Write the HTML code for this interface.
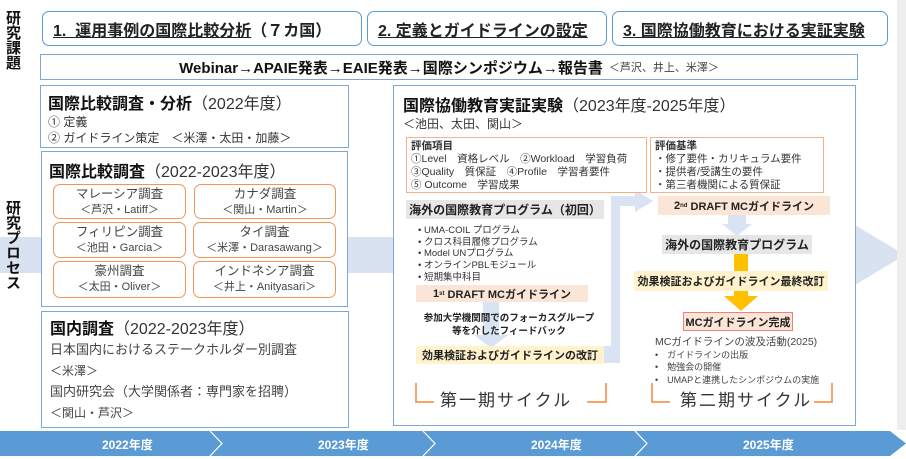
<!DOCTYPE html>
<html><head><meta charset="utf-8"><style>
*{margin:0;padding:0;box-sizing:border-box}
body{width:906px;height:459px;background:#fff;position:relative;overflow:hidden;font-family:"Liberation Sans","Noto Sans CJK JP",sans-serif;color:#222}
.a{position:absolute}
.vt{writing-mode:vertical-rl;font-weight:bold;font-size:15px;line-height:16px;color:#111;letter-spacing:0}
.top{border:1.5px solid #5b9bd5;border-radius:7px;background:#fff;font-size:16px;font-weight:bold;display:flex;align-items:center;padding-left:10px}
.top u{text-decoration:underline}
.bx{border:1.3px solid #7fa7d6;background:#fff}
.h{font-size:16px;font-weight:bold;color:#111}
.h span{font-weight:normal;color:#333}
.s{font-size:12px;color:#333;line-height:16px}
.ob{border:1.3px solid #f0955a;border-radius:7px;text-align:center;font-size:12.5px;line-height:17px;color:#444;padding-top:1px}
.ob small{font-size:11px;display:block;line-height:15px}
.grey{background:#e6e6e6;font-weight:bold;font-size:12px;display:flex;align-items:center;justify-content:center}
.pk{background:#fbe5d6;font-weight:bold;font-size:11px;display:flex;align-items:center;justify-content:center}
.yl{background:#fff2cc;font-weight:bold;font-size:11px;display:flex;align-items:center;justify-content:center}
.eb{border:1.3px solid #f4b183;font-size:10.5px;line-height:13px;padding:2px 4px;color:#333;background:#fff}
.ti{color:#fff;font-weight:bold;font-size:12px}
</style></head><body>
<!-- background big arrow -->
<div class="a" style="left:0;top:237px;width:860px;height:36px;background:#d9e2f1"></div>
<svg class="a" style="left:850px;top:222px" width="56" height="66"><polygon points="0,0 55,33 0,66" fill="#d9e2f1"/></svg>
<div class="a" style="left:897px;top:0;width:9px;height:430px;background:#eee"></div>

<div class="a vt" style="left:4px;top:10px">研究課題</div>
<div class="a vt" style="left:4px;top:200px">研究プロセス</div>

<div class="a top" style="left:42px;top:11px;width:320px;height:35px"><u>1.&nbsp; 運用事例の国際比較分析</u>（７カ国）</div>
<div class="a top" style="left:367px;top:11px;width:240px;height:35px"><u>2. 定義とガイドラインの設定</u></div>
<div class="a top" style="left:612px;top:11px;width:276px;height:35px"><u>3. 国際協働教育における実証実験</u></div>

<div class="a bx" style="left:40px;top:54px;width:818px;height:26px;font-size:15px;font-weight:bold;display:flex;align-items:center;justify-content:center;color:#111">Webinar→APAIE発表→EAIE発表→国際シンポジウム→報告書<span style="font-size:11px;font-weight:normal;color:#444;margin-left:6px">＜芦沢、井上、米澤＞</span></div>

<div class="a bx" style="left:40px;top:85px;width:309px;height:63px;padding:4px 7px">
<div class="h">国際比較調査・分析<span>（2022年度）</span></div>
<div class="s">① 定義</div><div class="s">② ガイドライン策定　＜米澤・太田・加藤＞</div></div>

<div class="a bx" style="left:41px;top:151px;width:307px;height:156px;padding:6px 7px"><div class="h">国際比較調査<span>（2022-2023年度）</span></div></div>
<div class="a ob" style="left:53px;top:184px;width:133px;height:35px">マレーシア調査<small>＜芦沢・Latiff＞</small></div>
<div class="a ob" style="left:194px;top:184px;width:142px;height:35px">カナダ調査<small>＜関山・Martin＞</small></div>
<div class="a ob" style="left:53px;top:222px;width:133px;height:36px">フィリピン調査<small>＜池田・Garcia＞</small></div>
<div class="a ob" style="left:193px;top:222px;width:143px;height:36px">タイ調査<small>＜米澤・Darasawang＞</small></div>
<div class="a ob" style="left:53px;top:261px;width:133px;height:37px">豪州調査<small>＜太田・Oliver＞</small></div>
<div class="a ob" style="left:193px;top:261px;width:143px;height:37px">インドネシア調査<small>＜井上・Anityasari＞</small></div>

<div class="a bx" style="left:41px;top:311px;width:308px;height:117px;padding:3px 8px">
<div class="h">国内調査<span>（2022-2023年度）</span></div>
<div style="font-size:13px;color:#444;line-height:22px">日本国内におけるステークホルダー別調査</div>
<div style="font-size:12px;color:#444;line-height:20px">＜米澤＞</div>
<div style="font-size:13px;color:#444;line-height:22px">国内研究会（大学関係者：専門家を招聘）</div>
<div style="font-size:12px;color:#444;line-height:20px">＜関山・芦沢＞</div></div>

<!-- right box -->
<div class="a bx" style="left:393px;top:85px;width:463px;height:341px;padding:6px 9px">
<div class="h">国際協働教育実証実験<span>（2023年度-2025年度）</span></div>
<div class="s" style="font-size:12px">＜池田、太田、関山＞</div></div>
<!-- light blue flow arrows -->
<div class="a" style="left:483px;top:301px;width:16px;height:40px;background:#dae3f3"></div>
<svg class="a" style="left:474px;top:335px" width="34" height="14"><polygon points="0,0 34,0 17,13" fill="#dae3f3"/></svg>
<div class="a" style="left:603px;top:346px;width:16px;height:17px;background:#dae3f3"></div>
<div class="a" style="left:611px;top:196px;width:9px;height:167px;background:#dae3f3"></div>
<div class="a" style="left:611px;top:196px;width:30px;height:10px;background:#dae3f3"></div>
<svg class="a" style="left:635px;top:190px" width="20" height="22"><polygon points="0,0 18,11 0,22" fill="#dae3f3"/></svg>
<div class="a" style="left:728px;top:214px;width:18px;height:12px;background:#dae3f3"></div>
<svg class="a" style="left:722px;top:224px" width="30" height="13"><polygon points="0,0 30,0 15,12" fill="#dae3f3"/></svg>

<div class="a eb" style="left:406px;top:137px;width:241px;height:56px"><b>評価項目</b><br>①Level　資格レベル　②Workload　学習負荷<br>③Quality　質保証　④Profile　学習者要件<br>⑤ Outcome　学習成果</div>
<div class="a eb" style="left:650px;top:137px;width:174px;height:56px"><b>評価基準</b><br>・修了要件・カリキュラム要件<br>・提供者/受講生の要件<br>・第三者機関による質保証</div>

<div class="a grey" style="left:406px;top:200px;width:198px;height:19px">海外の国際教育プログラム（初回）</div>
<div class="a" style="left:418px;top:225px;font-size:9.5px;line-height:11.7px;color:#333">• UMA-COIL プログラム<br>• クロス科目履修プログラム<br>• Model UNプログラム<br>• オンラインPBLモジュール<br>• 短期集中科目</div>
<div class="a pk" style="left:416px;top:285px;width:172px;height:17px">1<sup style="font-size:6px">st</sup>&nbsp;DRAFT MCガイドライン</div>
<div class="a" style="left:414px;top:312px;width:190px;text-align:center;font-size:9.5px;font-weight:bold;line-height:13px">参加大学機関間でのフォーカスグループ<br>等を介したフィードバック</div>
<div class="a yl" style="left:416px;top:346px;width:188px;height:18px">効果検証およびガイドラインの改訂</div>

<div class="a pk" style="left:658px;top:196px;width:172px;height:19px">2<sup style="font-size:6px">nd</sup>&nbsp;DRAFT MCガイドライン</div>
<div class="a grey" style="left:662px;top:235px;width:150px;height:19px">海外の国際教育プログラム</div>
<div class="a" style="left:734px;top:254px;width:14px;height:17px;background:#ffc000"></div>
<div class="a yl" style="left:634px;top:271px;width:194px;height:20px">効果検証およびガイドライン最終改訂</div>
<div class="a" style="left:734px;top:291px;width:14px;height:6px;background:#ffc000"></div>
<svg class="a" style="left:724px;top:296px" width="34" height="15"><polygon points="0,0 34,0 17,15" fill="#ffc000"/></svg>
<div class="a pk" style="left:683px;top:312px;width:110px;height:19px;border:1px solid #f08080">MCガイドライン完成</div>
<div class="a" style="left:655px;top:336px;font-size:10.5px;line-height:12.5px;color:#444">MCガイドラインの波及活動(2025)<br><span style="font-size:9px">•　ガイドラインの出版<br>•　勉強会の開催<br>•　UMAPと連携したシンポジウムの実施</span></div>

<!-- brackets -->
<svg class="a" style="left:414px;top:382px" width="420" height="24" fill="none" stroke="#f08a3c" stroke-width="1.5">
<path d="M2,1 V20 H20"/><path d="M173,20 H192 V1"/>
<path d="M238,1 V20 H256"/><path d="M400,20 H418 V1"/></svg>
<div class="a" style="left:440px;top:386px;font-size:17px;color:#333;letter-spacing:2px">第一期サイクル</div>
<div class="a" style="left:680px;top:386px;font-size:17px;color:#333;letter-spacing:2px">第二期サイクル</div>

<!-- timeline -->
<svg class="a" style="left:0;top:431px" width="906" height="25">
<polygon points="0,0 890,0 906,12.5 890,25 0,25" fill="#5b9bd5"/>
<polyline points="210,0 222,12.5 210,25" fill="none" stroke="#fff" stroke-width="1.2"/>
<polyline points="423,0 435,12.5 423,25" fill="none" stroke="#fff" stroke-width="1.2"/>
<polyline points="635,0 647,12.5 635,25" fill="none" stroke="#fff" stroke-width="1.2"/>
</svg>
<div class="a ti" style="left:102px;top:436px">2022年度</div>
<div class="a ti" style="left:318px;top:436px">2023年度</div>
<div class="a ti" style="left:531px;top:436px">2024年度</div>
<div class="a ti" style="left:743px;top:436px">2025年度</div>
</body></html>
